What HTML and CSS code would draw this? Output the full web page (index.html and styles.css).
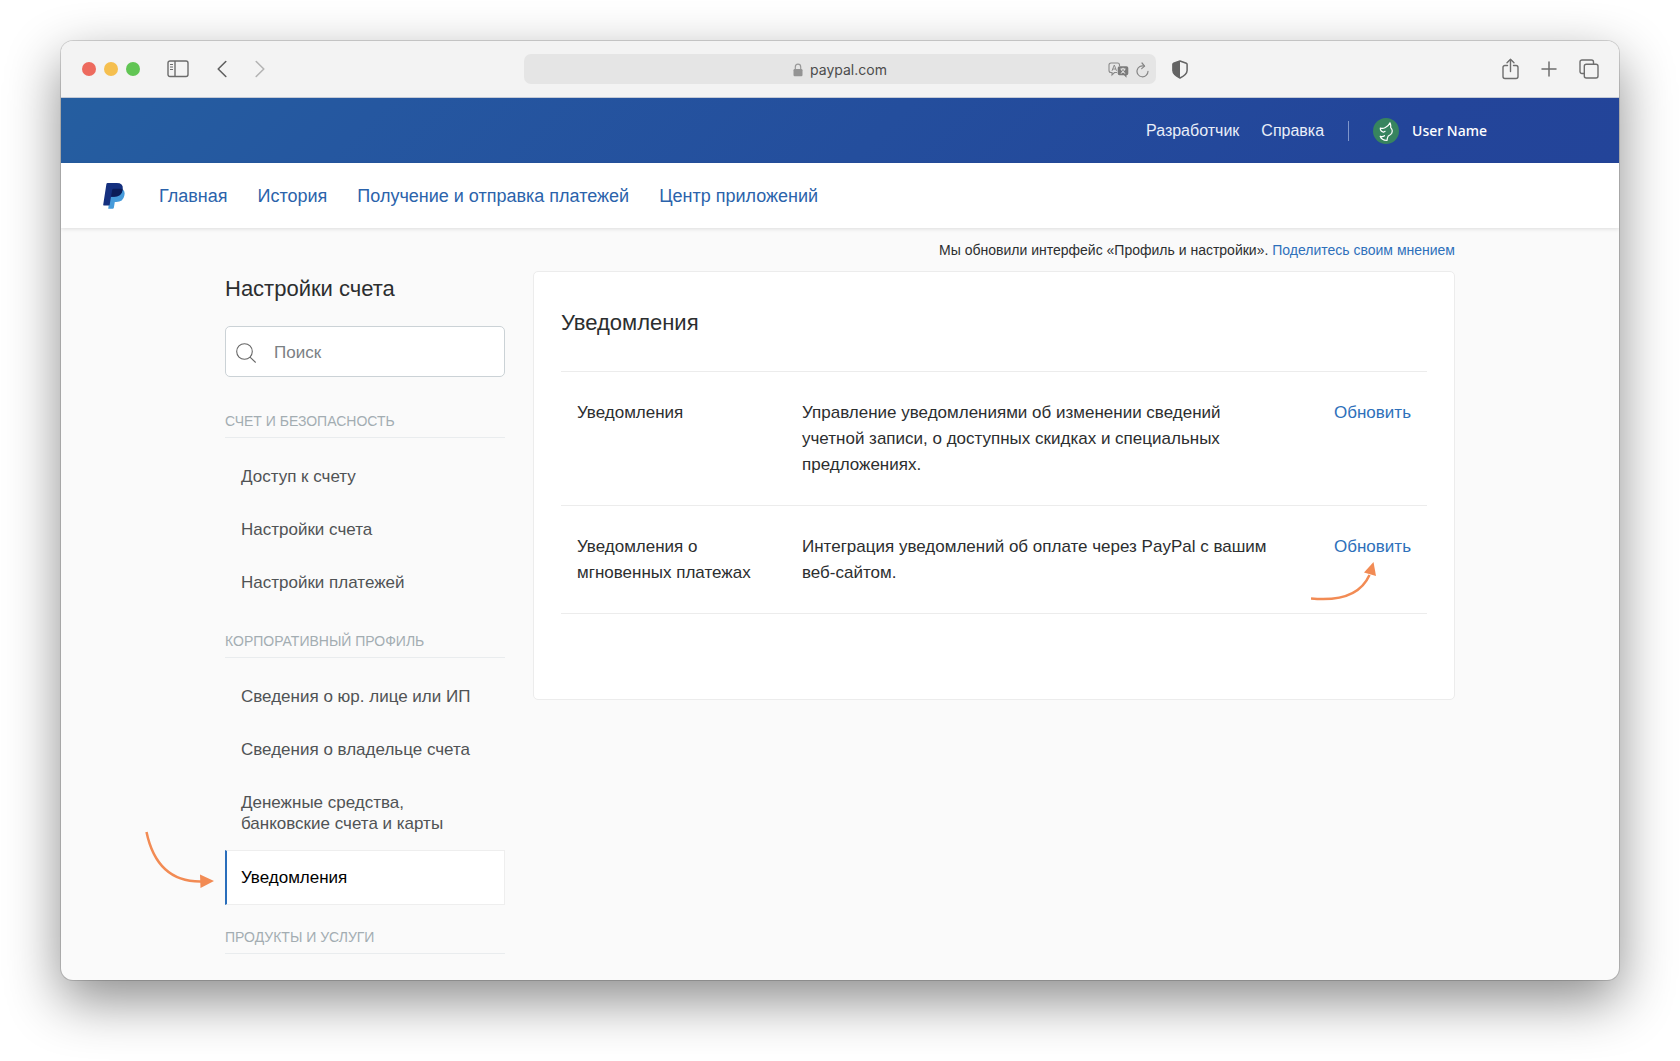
FILE: index.html
```html
<!DOCTYPE html>
<html lang="ru">
<head>
<meta charset="utf-8">
<title>Настройки счета</title>
<link rel="stylesheet" href="styles.css">
</head>
<body>
<div class="window">
  <div class="toolbar">
    <div class="toolbar-left">
      <div class="lights"><span class="light red"></span><span class="light yellow"></span><span class="light green"></span></div>
      <button class="tool sidebar-toggle" aria-label="Боковая панель">
        <svg width="22" height="18" viewBox="0 0 22 18" fill="none" stroke="#6b6b6b"><rect x="1" y="1" width="20" height="15.5" rx="2" stroke-width="1.4"/><path d="M8 1v15.5" stroke-width="1.4"/><path d="M3 4.5h3M3 7h3M3 9.5h3" stroke-width="1"/></svg>
      </button>
      <button class="tool back" aria-label="Назад">
        <svg width="10" height="18" viewBox="0 0 10 18" fill="none" stroke="#606060" stroke-width="1.6" stroke-linecap="round" stroke-linejoin="round"><path d="M8.8 1.5L1.2 9l7.600 7.500"/></svg>
      </button>
      <button class="tool" aria-label="Вперед">
        <svg width="10" height="18" viewBox="0 0 10 18" fill="none" stroke="#b4b4b4" stroke-width="1.6" stroke-linecap="round" stroke-linejoin="round"><path d="M1.200 1.500L8.800 9l-7.600 7.500"/></svg>
      </button>
    </div>
    <div class="address">
      <span class="address-text">
        <svg width="10" height="14" viewBox="0 0 10 14"><path d="M2.300 6.500V4a2.700 2.900 0 0 1 5.400 0v2.500" fill="none" stroke="#999" stroke-width="1.200"/><rect x=".5" y="6" width="9" height="7.300" rx="1.200" fill="#949494"/></svg>
        paypal.com
      </span>
      <span class="address-actions">
        <button class="tool" aria-label="Перевести">
          <svg width="21" height="16" viewBox="0 0 21 16"><path d="M9 10.500H6.500L4 13v-2.500H3a2 2 0 0 1-2-2V3a2 2 0 0 1 2-2h6.500a2 2 0 0 1 2 2v1" fill="none" stroke="#8a8a8a" stroke-width="1.100"/><path d="M4 8.800L6.300 3l2.200 5.800M4.800 7h3" fill="none" stroke="#8a8a8a" stroke-width="1"/><path d="M11.500 4.200h7a1.800 1.800 0 0 1 1.800 1.800v5.500a1.800 1.800 0 0 1-1.800 1.800v2.400l-2.500-2.400h-4.500a1.800 1.800 0 0 1-1.800-1.800V6a1.800 1.800 0 0 1 1.800-1.800z" fill="#7b7b7b"/><path d="M12.500 7h5M15 5.800V7M13.300 7.200c.6 2 2 3.400 3.900 4.100M16.700 7.200c-.6 2-2 3.400-3.900 4.100" fill="none" stroke="#eee" stroke-width="1"/></svg>
        </button>
        <button class="tool" aria-label="Обновить страницу">
          <svg width="13" height="16" viewBox="0 0 13 16" fill="none" stroke="#858585" stroke-width="1.200" stroke-linecap="round" stroke-linejoin="round"><path d="M8.300 4.100a5.500 5.500 0 1 0 3.700 5.200"/><path d="M6 1l2.600 3.100L5.700 6.600"/></svg>
        </button>
      </span>
    </div>
    <div class="toolbar-right">
      <button class="tool" aria-label="Отчет о конфиденциальности">
        <svg width="16" height="19" viewBox="0 0 16 19"><path d="M8 1l6.300 2.300q.8.300.8 1.200v6q0 4-7.100 7.500Q.9 14.500.9 10.500v-6q0-.9.8-1.200z" fill="none" stroke="#646464" stroke-width="1.500" stroke-linejoin="round"/><path d="M8 1v17Q.9 14.500.9 10.500v-6q0-.9.8-1.200z" fill="#646464"/></svg>
      </button>
      <div class="toolbar-group">
        <button class="tool" aria-label="Поделиться">
          <svg width="17" height="22" viewBox="0 0 17 22" fill="none" stroke="#6e6e6e" stroke-width="1.400" stroke-linecap="round" stroke-linejoin="round"><path d="M5.500 7.500H3a2 2 0 0 0-2 2v9a2 2 0 0 0 2 2h11a2 2 0 0 0 2-2v-9a2 2 0 0 0-2-2h-2.500M8.500 13.500V1.500M5 4.700l3.500-3.500L12 4.700"/></svg>
        </button>
        <button class="tool" aria-label="Новая вкладка">
          <svg width="16" height="16" viewBox="0 0 16 16" fill="none" stroke="#6e6e6e" stroke-width="1.500" stroke-linecap="round"><path d="M8 1v14M1 8h14"/></svg>
        </button>
        <button class="tool" aria-label="Все вкладки">
          <svg width="20" height="20" viewBox="0 0 20 20" fill="none" stroke="#6e6e6e" stroke-width="1.400" stroke-linejoin="round"><rect x="5.300" y="5.300" width="13.700" height="13.700" rx="2"/><path d="M5.300 14.500H3a2 2 0 0 1-2-2V3a2 2 0 0 1 2-2h9.500a2 2 0 0 1 2 2v2.300"/></svg>
        </button>
      </div>
    </div>
  </div>

  <header class="account-bar">
    <a href="#">Разработчик</a>
    <a href="#">Справка</a>
    <span class="divider"></span>
    <a href="#" class="user">
      <svg width="26" height="26" viewBox="0 0 26 26"><circle cx="13" cy="13" r="13" fill="#37845f"/><path d="M10.500 14.200Q7 13 7.300 10q2.300 1 4.700-.2Q15.500 8.300 17 4.800q1.200 2.400.7 4.900 2.500 2.500 1 5.600-1.500 1.700-3.400 2.700-1 1.700-1.300 4.500-5.500-.4-6.800-4.300 2.300 1 4.300-.5M10.500 14.200l1.600-.9" fill="none" stroke="#fff" stroke-width="1.200" stroke-linecap="round" stroke-linejoin="round"/></svg>
      User Name
    </a>
  </header>

  <nav class="main-nav">
    <a href="#" class="logo" aria-label="PayPal">
      <svg width="22" height="26" viewBox="0 0 22 26"><path d="M8 6.500h12q2.400 2.200 1.300 6.200-1.200 6.200-8 6.200h-1.500l-.9 5.600q-.2 1.200-1.300 1.200H5.200z" fill="#469bdb"/><path d="M4.600 0h9.200q6.500 0 6 5.800-1 8-8.800 8H8l-1.300 8q-.1.700-.8.700H.8q-.7 0-.6-.8L3.400 1Q3.600 0 4.600 0z" fill="#15307f"/><path d="M9.300 6.500q.3-.8 1.200-.8h6.800q1.600.1 2.500.8-1.200 7.300-8.800 7.300H8z" fill="#0c1d59"/></svg>
    </a>
    <a href="#">Главная</a>
    <a href="#">История</a>
    <a href="#">Получение и отправка платежей</a>
    <a href="#">Центр приложений</a>
  </nav>

  <div class="page">
    <aside class="sidebar">
      <h1>Настройки счета</h1>
      <label class="search">
        <svg width="22" height="20" viewBox="0 0 22 20" fill="none" stroke="#666" stroke-width="1.100"><circle cx="8.500" cy="8.500" r="7.800"/><path d="M14 14.200l5.700 5.300"/></svg>
        <input type="search" placeholder="Поиск" aria-label="Поиск">
      </label>
      <section class="menu">
        <h2>СЧЕТ И БЕЗОПАСНОСТЬ</h2>
        <a href="#">Доступ к счету</a>
        <a href="#">Настройки счета</a>
        <a href="#">Настройки платежей</a>
      </section>
      <section class="menu">
        <h2>КОРПОРАТИВНЫЙ ПРОФИЛЬ</h2>
        <a href="#">Сведения о юр. лице или ИП</a>
        <a href="#">Сведения о владельце счета</a>
        <a href="#">Денежные средства, банковские счета и карты</a>
        <a href="#" class="active">Уведомления
          <svg class="arrow arrow-menu" width="70" height="60" viewBox="0 0 70 60"><path d="M1.500 1Q12 51 56 50.500" fill="none" stroke="#f28b54" stroke-width="2.500"/><path d="M55 43.500L69 50l-13.500 7z" fill="#f28b54"/></svg>
        </a>
      </section>
      <section class="menu">
        <h2>ПРОДУКТЫ И УСЛУГИ</h2>
      </section>
    </aside>
    <main class="content">
      <p class="notice">Мы обновили интерфейс «Профиль и настройки». <a href="#">Поделитесь своим мнением</a></p>
      <div class="card">
        <h2>Уведомления</h2>
        <ul class="settings">
          <li>
            <h3>Уведомления</h3>
            <p>Управление уведомлениями об изменении сведений учетной записи, о доступных скидках и специальных предложениях.</p>
            <a href="#">Обновить</a>
          </li>
          <li>
            <h3>Уведомления о мгновенных платежах</h3>
            <p>Интеграция уведомлений об оплате через PayPal с вашим веб-сайтом.</p>
            <a href="#">Обновить
              <svg class="arrow arrow-update" width="66" height="40" viewBox="0 0 66 40"><path d="M0 36.500Q46 41 58.500 13" fill="none" stroke="#f28b54" stroke-width="2.500"/><path d="M53 10.500L62.500 0 65 14z" fill="#f28b54"/></svg>
            </a>
          </li>
        </ul>
      </div>
    </main>
  </div>
</div>
</body>
</html>
```
FILE: styles.css
```css
* { box-sizing: border-box; }
html, body { margin: 0; }
body {
  min-height: 100vh;
  padding: 41px 61px 81px;
  display: flex;
  background: #fff;
  color: #2c2e2f;
  font: 17px/26px "Liberation Sans", Arial, sans-serif;
}
a { color: #2e70ba; text-decoration: none; }
h1, h2, h3, p, ul { margin: 0; padding: 0; font-weight: 400; }
svg { display: block; flex: none; }

.window {
  flex: 1;
  min-width: 0;
  display: flex;
  flex-direction: column;
  overflow: hidden;
  border-radius: 12px;
  background: #fafafa;
  box-shadow: 0 0 0 1px rgba(0, 0, 0, .15), 0 20px 54px rgba(0, 0, 0, .46);
}

.toolbar {
  display: grid;
  grid-template-columns: 1fr minmax(240px, 632px) 1fr;
  align-items: center;
  height: 57px;
  background: #f3f3f3;
  border-bottom: 1px solid #c4cad6;
}
.tool { padding: 0; border: 0; background: none; }
.toolbar-left { display: flex; align-items: center; padding-left: 21px; }
.lights { display: flex; gap: 8px; }
.light { width: 14px; height: 14px; border-radius: 50%; }
.red { background: #ed6a5e; }
.yellow { background: #f5bf4f; }
.green { background: #61c554; }
.sidebar-toggle { margin-left: 27px; }
.back { margin: 0 28px; }
.address {
  display: grid;
  grid-template-columns: 1fr auto 1fr;
  align-items: center;
  height: 30px;
  padding: 2px 7px 0;
  border-radius: 7px;
  background: #e5e5e5;
}
.address-text {
  grid-column: 2;
  display: flex;
  align-items: center;
  gap: 7px;
  color: #4c4c4c;
  font: 14px/20px Inter, sans-serif;
}
.address-actions { display: flex; justify-content: flex-end; align-items: center; gap: 7px; }
.toolbar-right {
  display: flex;
  justify-content: space-between;
  align-items: center;
  padding: 0 20px 0 16px;
}
.toolbar-group { display: flex; align-items: center; gap: 22px; }

.account-bar {
  display: flex;
  justify-content: flex-end;
  align-items: center;
  gap: 22px;
  height: 65px;
  padding-right: 132px;
  background: linear-gradient(135deg, #255ea0 0%, #2557a0 20%, #23459a 85%, #234499 100%);
  font-size: 16px;
}
.account-bar a { color: #e9eef8; }
.divider { width: 1px; height: 20px; margin: 0 2px; background: #7f96cb; }
.account-bar .user {
  display: flex;
  align-items: center;
  gap: 13px;
  color: #fff;
  font: 500 14px/26px "Noto Sans", sans-serif;
}

.main-nav {
  display: flex;
  align-items: center;
  gap: 30px;
  height: 65px;
  padding-left: 42px;
  background: #fff;
  box-shadow: 0 1px 4px rgba(0, 0, 0, .12);
  font-size: 18px;
}
.main-nav .logo { margin-right: 4px; }
.main-nav a { color: #2b63ab; }

.page {
  display: grid;
  grid-template-columns: 280px minmax(0, 1fr);
  gap: 28px;
  width: 100%;
  max-width: 1230px;
  margin: 0 auto;
  padding-bottom: 13px;
}

.sidebar { padding-top: 47px; }
.sidebar h1 { font-size: 22px; line-height: 28px; }
.search {
  display: flex;
  align-items: center;
  gap: 16px;
  height: 51px;
  margin-top: 23px;
  padding: 2px 10px 0;
  border: 1px solid #cbd2d6;
  border-radius: 5px;
  background: #fff;
}
.search input {
  flex: 1;
  min-width: 0;
  padding: 0;
  border: 0;
  outline: 0;
  background: none;
  color: #2c2e2f;
  font: inherit;
}
.search input::placeholder { color: #7b8084; opacity: 1; }
.menu { margin-top: 22px; }
.search + .menu { margin-top: 34px; }
.menu h2 {
  margin-bottom: 12px;
  padding-bottom: 6px;
  border-bottom: 1px solid #e9ecee;
  color: #a3adb2;
  font-size: 14px;
  line-height: 20px;
}
.menu a {
  display: block;
  padding: 16px;
  color: #505355;
  line-height: 21px;
}
.menu .active {
  position: relative;
  padding-left: 14px;
  border: 1px solid #eee;
  border-left: 2px solid #2a6ebb;
  background: #fff;
  color: #000;
}
.arrow { position: absolute; }
.arrow-menu { right: 100%; bottom: 13px; margin-right: 12px; }
.arrow-update { right: 34px; top: 28px; }

.notice { margin-top: 12px; font-size: 14px; line-height: 20px; text-align: right; }
.card {
  min-height: 429px;
  margin-top: 11px;
  padding: 37px 27px 27px;
  border: 1px solid #ececec;
  border-radius: 5px;
  background: #fff;
}
.card h2 { padding-bottom: 34px; border-bottom: 1px solid #ececec; font-size: 22px; line-height: 28px; }
.settings { list-style: none; }
.settings li {
  display: grid;
  grid-template-columns: 195px minmax(0, 1fr) auto;
  column-gap: 30px;
  padding: 28px 16px 27px;
  border-bottom: 1px solid #ececec;
}
.settings h3 { font-size: 17px; }
.settings p { max-width: 470px; }
.settings a { position: relative; }
```
